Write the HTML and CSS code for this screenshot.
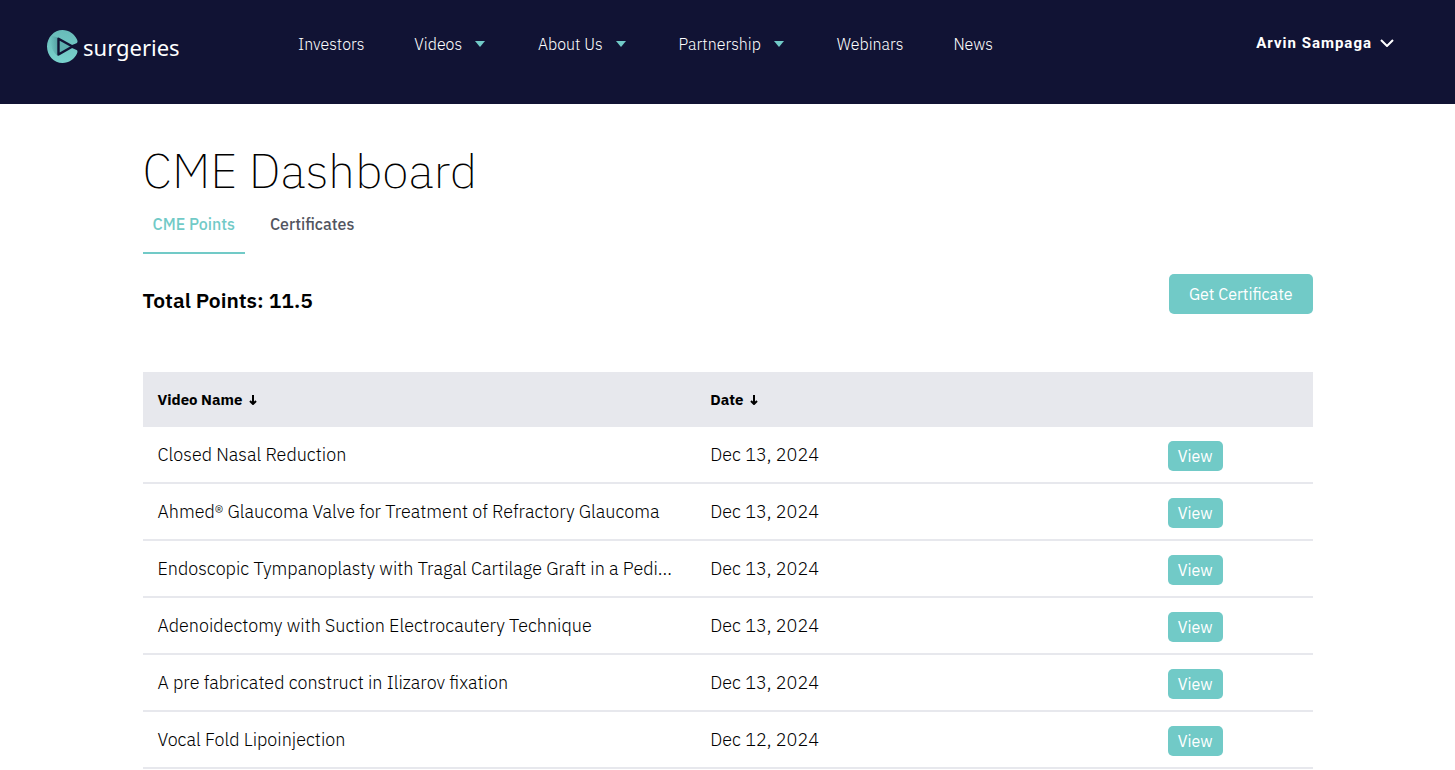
FILE: index.html
```html
<!DOCTYPE html>
<html lang="en">
<head>
<meta charset="utf-8">
<meta name="viewport" content="width=device-width, initial-scale=1">
<title>CME Dashboard</title>
<link rel="stylesheet" href="styles.css">
</head>
<body>
<header class="site-header">
  <a class="logo" href="#">
    <svg class="logo-mark" viewBox="0 0 31 33" aria-hidden="true">
      <defs>
        <linearGradient id="mark" x1="0" y1="0" x2="0" y2="1">
          <stop offset="0" stop-color="#68bbb9"/>
          <stop offset="1" stop-color="#79d2cd"/>
        </linearGradient>
        <linearGradient id="fold" x1="0" y1="0" x2="1" y2="0">
          <stop offset="0" stop-color="#3f8389" stop-opacity="0"/>
          <stop offset="1" stop-color="#3f8389" stop-opacity=".55"/>
        </linearGradient>
      </defs>
      <path fill="url(#mark)" d="M30 9.500C27.500 4 22 0 15.500 0C7 0 0 7.500 0 16.500S7 33 15.500 33C22 33 27.500 29 30 23.500c.8-2 .7-3-1-3.700L25 18v-3l4.500-1.800c1.300-.7 1.300-2 .5-3.700z"/>
      <path fill="url(#fold)" d="M4 5.500l7 2V26c-5-3-9-11-7-20.500z"/>
      <path fill="#5eb0af" stroke="#111334" stroke-width="2.400" stroke-linejoin="round" d="M11.500 8.700v15.800L25.500 16.500z"/>
    </svg>
    <span>surgeries</span>
  </a>
  <nav class="main-nav" aria-label="Main">
    <a href="#">Investors</a>
    <a class="has-menu" href="#">Videos</a>
    <a class="has-menu" href="#">About Us</a>
    <a class="has-menu" href="#">Partnership</a>
    <a href="#">Webinars</a>
    <a href="#">News</a>
  </nav>
  <button class="account" type="button">Arvin Sampaga
    <svg class="chevron" viewBox="0 0 14 8" aria-hidden="true"><path d="M1 1l6 6 6-6"/></svg>
  </button>
</header>
<main class="container">
  <h1>CME Dashboard</h1>
  <nav class="tabs" aria-label="Dashboard">
    <a class="tab active" href="#" aria-current="page">CME Points</a>
    <a class="tab" href="#">Certificates</a>
  </nav>
  <section class="summary">
    <h2>Total Points: 11.5</h2>
    <button class="btn btn-large" type="button">Get Certificate</button>
  </section>
  <table class="points">
    <thead>
      <tr>
        <th class="col-name" scope="col">Video Name <svg class="sort" viewBox="0 0 8 10" aria-hidden="true"><path d="M4 0v9M1 6l3 3 3-3"/></svg></th>
        <th class="col-date" scope="col">Date <svg class="sort" viewBox="0 0 8 10" aria-hidden="true"><path d="M4 0v9M1 6l3 3 3-3"/></svg></th>
        <td class="col-action"></td>
      </tr>
    </thead>
    <tbody>
      <tr><td>Closed Nasal Reduction</td><td>Dec 13, 2024</td><td class="action"><button class="btn" type="button">View</button></td></tr>
      <tr><td>Ahmed® Glaucoma Valve for Treatment of Refractory Glaucoma</td><td>Dec 13, 2024</td><td class="action"><button class="btn" type="button">View</button></td></tr>
      <tr><td>Endoscopic Tympanoplasty with Tragal Cartilage Graft in a Pedi...</td><td>Dec 13, 2024</td><td class="action"><button class="btn" type="button">View</button></td></tr>
      <tr><td>Adenoidectomy with Suction Electrocautery Technique</td><td>Dec 13, 2024</td><td class="action"><button class="btn" type="button">View</button></td></tr>
      <tr><td>A pre fabricated construct in Ilizarov fixation</td><td>Dec 13, 2024</td><td class="action"><button class="btn" type="button">View</button></td></tr>
      <tr><td>Vocal Fold Lipoinjection</td><td>Dec 12, 2024</td><td class="action"><button class="btn" type="button">View</button></td></tr>
    </tbody>
  </table>
</main>
</body>
</html>
```
FILE: styles.css
```css
* { box-sizing: border-box; }
body {
  margin: 0;
  background: #fff;
  color: #000;
  font-family: "IBM Plex Sans", Roboto, "Liberation Sans", sans-serif;
  font-size: 16px;
}
a { color: inherit; text-decoration: none; }
button { border: 0; font: inherit; cursor: pointer; }

.site-header {
  display: flex;
  align-items: flex-start;
  padding: 28px 61px 38px 47px;
  background: #111334;
  color: #fff;
}
.logo {
  display: flex;
  align-items: center;
  gap: 5px;
  width: 251px;
  height: 37px;
  font-family: "Noto Sans", sans-serif;
  font-size: 22px;
  line-height: 28px;
}
.logo-mark { width: 31px; height: 33px; }
.main-nav {
  display: flex;
  gap: 50px;
  font-weight: 300;
  line-height: 32px;
  padding-bottom: 6px;
}
.has-menu { display: flex; align-items: center; gap: 13px; margin-right: 3px; }
.has-menu::after {
  content: "";
  border: 5px solid transparent;
  border-top: 6px solid #71cac7;
  border-bottom: 0;
}
.account {
  display: flex;
  align-items: center;
  gap: 8px;
  margin-left: auto;
  padding: 0;
  background: none;
  color: #fff;
  font-family: Roboto, sans-serif;
  font-size: 15px;
  font-weight: 700;
  line-height: 30px;
  letter-spacing: 1px;
}
.chevron { width: 14px; height: 8px; fill: none; stroke: #fff; stroke-width: 2; }

.container { max-width: 1170px; margin: 0 auto; padding-top: 36px; }
h1 { margin: 0; font-size: 48px; font-weight: 200; line-height: 60px; }
.tabs { display: flex; gap: 15px; }
.tab {
  padding: 9px 10px 13px;
  border-bottom: 2px solid transparent;
  color: #53555f;
  font-weight: 500;
  line-height: 30px;
}
.tab.active { border-color: #71cac7; color: #71cac7; }
.summary {
  display: flex;
  justify-content: space-between;
  align-items: flex-start;
  margin: 20px 0 58px;
}
h2 { margin: 12px 0 0; font-size: 21px; font-weight: 600; line-height: 28px; }
.btn {
  height: 30px;
  padding: 0 10px;
  border-radius: 5px;
  background: #71cac7;
  color: #fff;
}
.btn-large { height: 40px; padding: 0 20px; }

.points { width: 100%; border-collapse: separate; border-spacing: 0; table-layout: fixed; }
.points thead { background: #e7e8ed; }
.points th { height: 55px; padding: 0 15px; font-size: 15px; font-weight: 700; text-align: left; }
.points tbody td {
  height: 57px;
  padding: 0 15px;
  border-bottom: 2px solid #e7e8ed;
  font-size: 18px;
  font-weight: 300;
}
.points tbody .action { padding-top: 3px; font-size: 16px; font-weight: 400; }
.col-name { width: 47.25%; }
.col-date { width: 39.1%; }
.sort { width: 8px; height: 10px; margin-left: 3px; fill: none; stroke: #000; stroke-width: 2; }
```
